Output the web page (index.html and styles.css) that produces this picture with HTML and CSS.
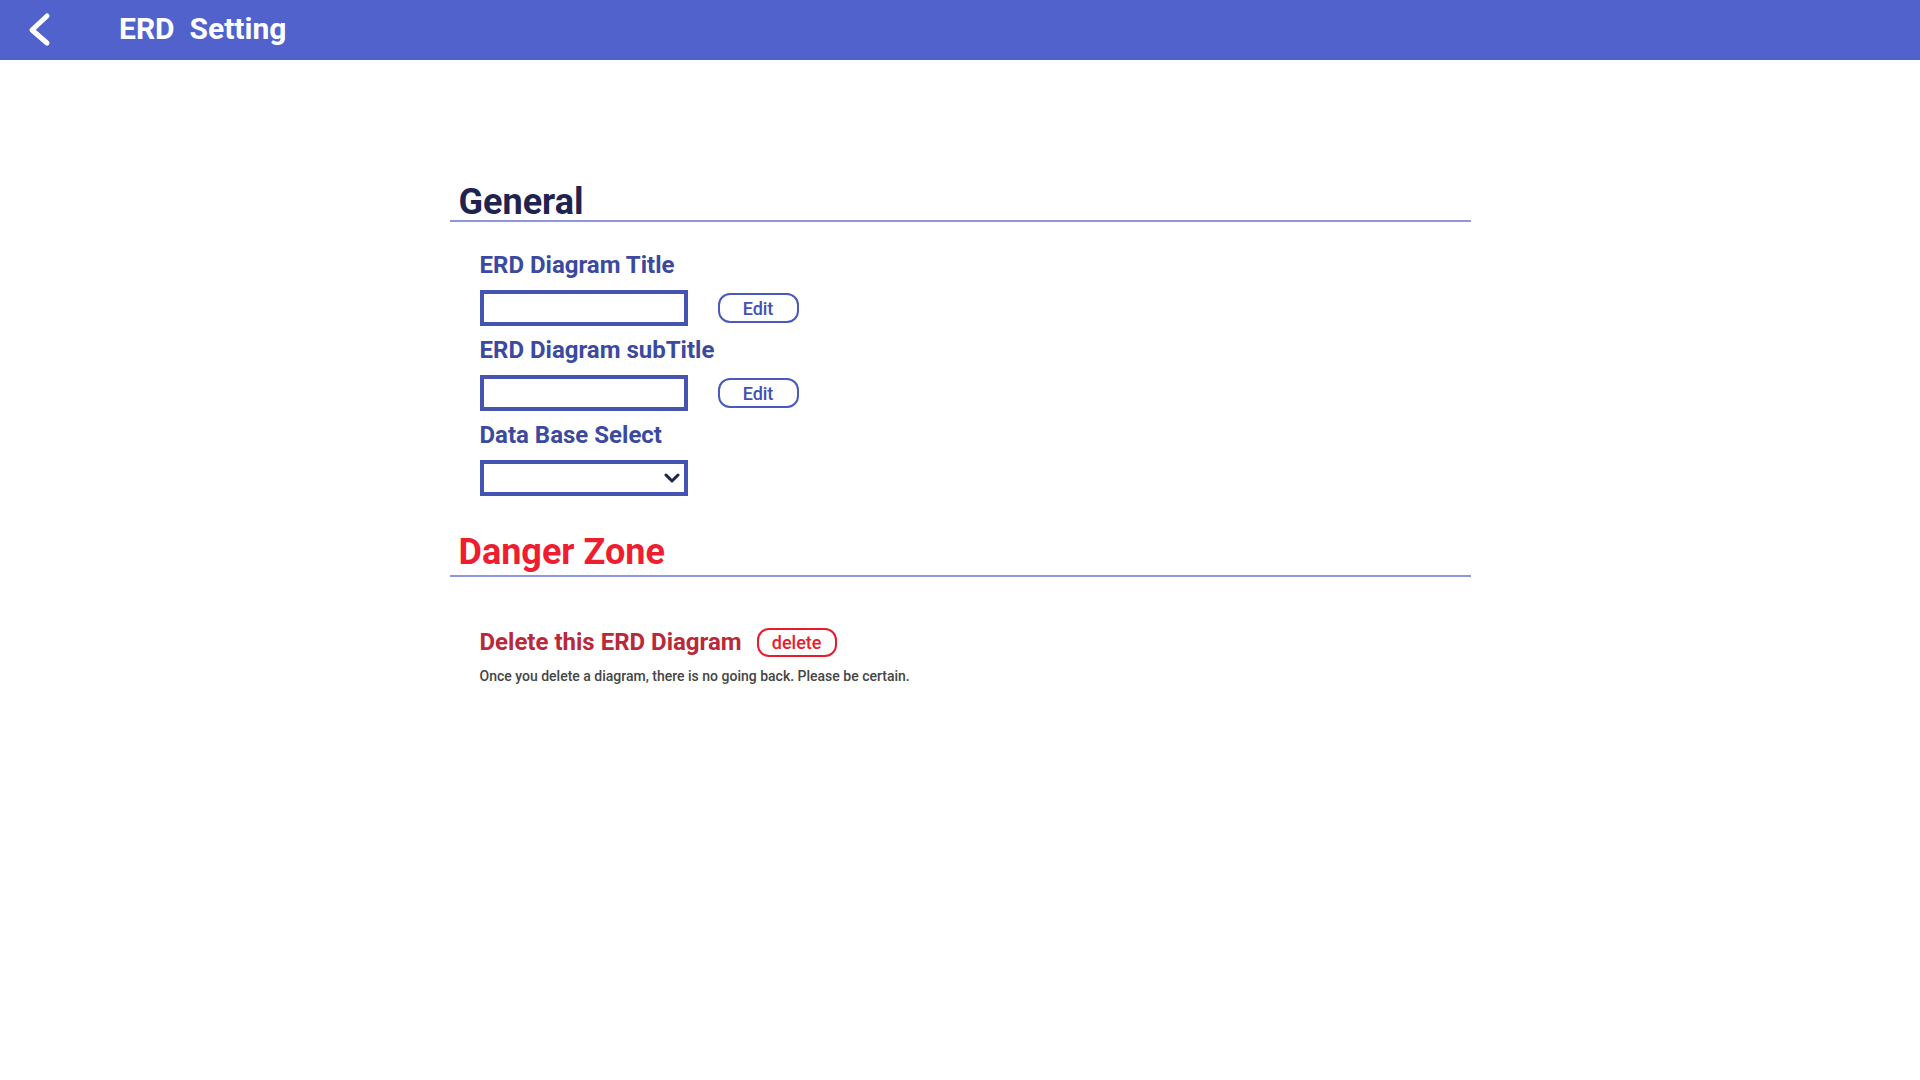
FILE: index.html
```html
<!DOCTYPE html>
<html lang="en">
<head>
  <meta charset="UTF-8" />
  <title>ERD Setting</title>
  <link rel="stylesheet" href="styles.css">
</head>
<body>
  <header class="topbar">
    <a class="back-btn" href="#" aria-label="Back">
      <svg width="30" height="40" viewBox="0 0 30 40">
        <path d="M23 6 L8 20 L23 33" fill="none" stroke="#fff" stroke-width="5" stroke-linecap="round" stroke-linejoin="round" />
      </svg>
    </a>
    <h1 class="topbar-title">ERD&nbsp; Setting</h1>
  </header>

  <main class="settings">
    <section class="block">
      <h2 class="block-title">General</h2>
      <div class="fields">
        <div class="field">
          <label class="field-label" for="erd-title">ERD Diagram Title</label>
          <div class="field-row">
            <input type="text" id="erd-title" class="field-input" />
            <button class="btn-edit">Edit</button>
          </div>
        </div>

        <div class="field">
          <label class="field-label" for="erd-subtitle">ERD Diagram subTitle</label>
          <div class="field-row">
            <input type="text" id="erd-subtitle" class="field-input" />
            <button class="btn-edit">Edit</button>
          </div>
        </div>

        <div class="field">
          <label class="field-label" for="db-select">Data Base Select</label>
          <div class="field-row">
            <div class="select-wrap">
              <select id="db-select" class="field-input field-select"></select>
              <svg class="select-arrow" width="16" height="10" viewBox="0 0 16 10">
                <path d="M2 2 L8 8 L14 2" fill="none" stroke="#1f2350" stroke-width="3" stroke-linecap="round" stroke-linejoin="round" />
              </svg>
            </div>
          </div>
        </div>
      </div>
    </section>

    <section class="block danger">
      <h2 class="block-title">Danger Zone</h2>
      <div class="danger-body">
        <div class="danger-row">
          <span class="danger-label">Delete this ERD Diagram</span>
          <button class="btn-delete">delete</button>
        </div>
        <p class="danger-note">Once you delete a diagram, there is no going back. Please be certain.</p>
      </div>
    </section>
  </main>
</body>
</html>
```

FILE: styles.css
```css
body {
  margin: 0;
  font-family: Roboto, "Liberation Sans", Arial, sans-serif;
  background: #fff;
}

.topbar {
  height: 60px;
  background-color: #5162cd;
  display: flex;
  align-items: center;
}

.back-btn {
  display: flex;
  margin-left: 24px;
}

.topbar-title {
  margin: 0 0 0 65px;
  padding-bottom: 3px;
  font-size: 30px;
  line-height: 32px;
  font-weight: 700;
  color: #fff;
}

.settings {
  width: 1021px;
  margin: 0 auto;
  padding-top: 124px;
}

.block-title {
  margin: 0;
  padding-left: 9px;
  font-size: 36px;
  line-height: 36px;
  font-weight: 700;
  color: #1f2350;
  border-bottom: 2px solid #8e98d5;
}

.fields {
  padding: 19px 0 0 30px;
}

.field-label {
  display: block;
  margin: 12px 0;
  font-size: 24px;
  line-height: 25px;
  font-weight: 700;
  color: #3b4a9f;
}

.field-row {
  display: flex;
  align-items: center;
}

.field-input {
  box-sizing: border-box;
  width: 208px;
  height: 36px;
  margin: 0;
  border: 4px solid #4553b3;
  border-radius: 0;
  background: #fff;
  outline: none;
}

.btn-edit {
  box-sizing: border-box;
  width: 81px;
  height: 30px;
  margin-left: 30px;
  border: 2px solid #4a59ba;
  border-radius: 12px;
  background: #fff;
  font-family: inherit;
  font-size: 18px;
  font-weight: 500;
  color: #4251b3;
  padding: 0;
}

.select-wrap {
  position: relative;
  display: inline-block;
}

.field-select {
  appearance: none;
  -webkit-appearance: none;
}

.select-arrow {
  position: absolute;
  right: 8px;
  top: 13px;
  pointer-events: none;
}

.danger {
  margin-top: 38px;
}

.danger .block-title {
  padding-bottom: 5px;
  color: #ee1d2f;
}

.danger-body {
  padding: 51px 0 0 30px;
}

.danger-row {
  display: flex;
  align-items: center;
}

.danger-label {
  font-size: 24px;
  line-height: 29px;
  font-weight: 700;
  color: #b8293a;
}

.btn-delete {
  box-sizing: border-box;
  width: 80px;
  height: 29px;
  margin-left: 15px;
  border: 2px solid #e81c2c;
  border-radius: 12px;
  background: #fff;
  font-family: inherit;
  font-size: 18px;
  font-weight: 500;
  color: #e81c2c;
  padding: 0;
}

.danger-note {
  margin: 11px 0 0;
  font-size: 14px;
  line-height: 16px;
  font-weight: 500;
  color: #454545;
}
```
